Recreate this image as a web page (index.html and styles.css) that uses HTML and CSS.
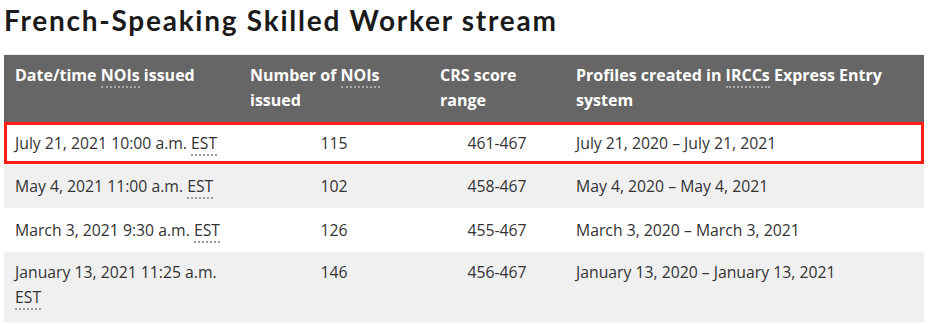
FILE: index.html
```html
<!DOCTYPE html>
<html lang="en">
<head>
<meta charset="utf-8">
<link rel="stylesheet" href="styles.css">
</head>
<body>
<h2 class="title">French-Speaking Skilled Worker stream</h2>
<table class="rounds">
  <thead>
    <tr>
      <th class="c1">Date/time <abbr>NOIs</abbr> issued</th>
      <th class="c2">Number of <abbr>NOIs</abbr> issued</th>
      <th class="c3">CRS score range</th>
      <th class="c4">Profiles created in <abbr>IRCCs</abbr> Express Entry system</th>
    </tr>
  </thead>
  <tbody>
    <tr class="hl">
      <td>July 21, 2021 10:00 a.m. <abbr>EST</abbr></td>
      <td class="num">115</td>
      <td class="num">461-467</td>
      <td>July 21, 2020 – July 21, 2021</td>
    </tr>
    <tr class="alt">
      <td>May 4, 2021 11:00 a.m. <abbr>EST</abbr></td>
      <td class="num">102</td>
      <td class="num">458-467</td>
      <td>May 4, 2020 – May 4, 2021</td>
    </tr>
    <tr>
      <td>March 3, 2021 9:30 a.m. <abbr>EST</abbr></td>
      <td class="num">126</td>
      <td class="num">455-467</td>
      <td>March 3, 2020 – March 3, 2021</td>
    </tr>
    <tr class="alt last">
      <td>January 13, 2021 11:25 a.m. <abbr>EST</abbr></td>
      <td class="num">146</td>
      <td class="num">456-467</td>
      <td>January 13, 2020 – January 13, 2021</td>
    </tr>
  </tbody>
</table>
</body>
</html>
```

FILE: styles.css
```css
body {
  margin: 0;
  padding: 0 4px;
  background: #fff;
  font-family: "Open Sans", "Noto Sans", sans-serif;
  color: #333;
}
.title {
  margin: 0;
  padding: 3px 0 0 0;
  height: 54px;
  box-sizing: border-box;
  font-family: Lato, "Open Sans", sans-serif;
  font-weight: 700;
  font-size: 28px;
  letter-spacing: 1.75px;
  line-height: 34px;
  color: #1a1a1a;
}
.rounds {
  width: 920px;
  border-collapse: separate;
  border-spacing: 0;
  table-layout: fixed;
  font-size: 15.75px;
  line-height: 25px;
  border-top: 1px solid #eee;
}
.rounds th, .rounds td {
  box-sizing: border-box;
  text-align: left;
  vertical-align: top;
  padding: 10px 11px 9px 11px;
}
.rounds thead tr {
  background: #666;
}
.rounds th {
  color: #fff;
  font-size: 16px;
  font-weight: 700;
  padding-top: 8px;
  padding-bottom: 9px;
}
.c1 { width: 235px; }
.c2 { width: 190px; }
.c3 { width: 136px; }
.rounds td.num {
  text-align: center;
}
abbr {
  text-decoration: none;
  border-bottom: 2px dotted #999;
}
.rounds th abbr {
  border-bottom-color: #aaa;
}
.rounds tbody tr {
  background: #fff;
}
.rounds tbody tr.alt {
  background: #f0f0f0;
}
.rounds tbody tr.hl td {
  border-top: 3px solid #ff2015;
  border-bottom: 3px solid #ff2015;
  padding-top: 6px;
  padding-bottom: 5px;
}
.rounds tbody tr.hl td:first-child {
  border-left: 3px solid #ff2015;
  padding-left: 8px;
}
.rounds tbody tr.hl td:last-child {
  border-right: 3px solid #ff2015;
}
.rounds tbody tr.last td {
  padding-top: 8px;
  padding-bottom: 12px;
  border-bottom: 1px solid #f6f6f6;
}
```
